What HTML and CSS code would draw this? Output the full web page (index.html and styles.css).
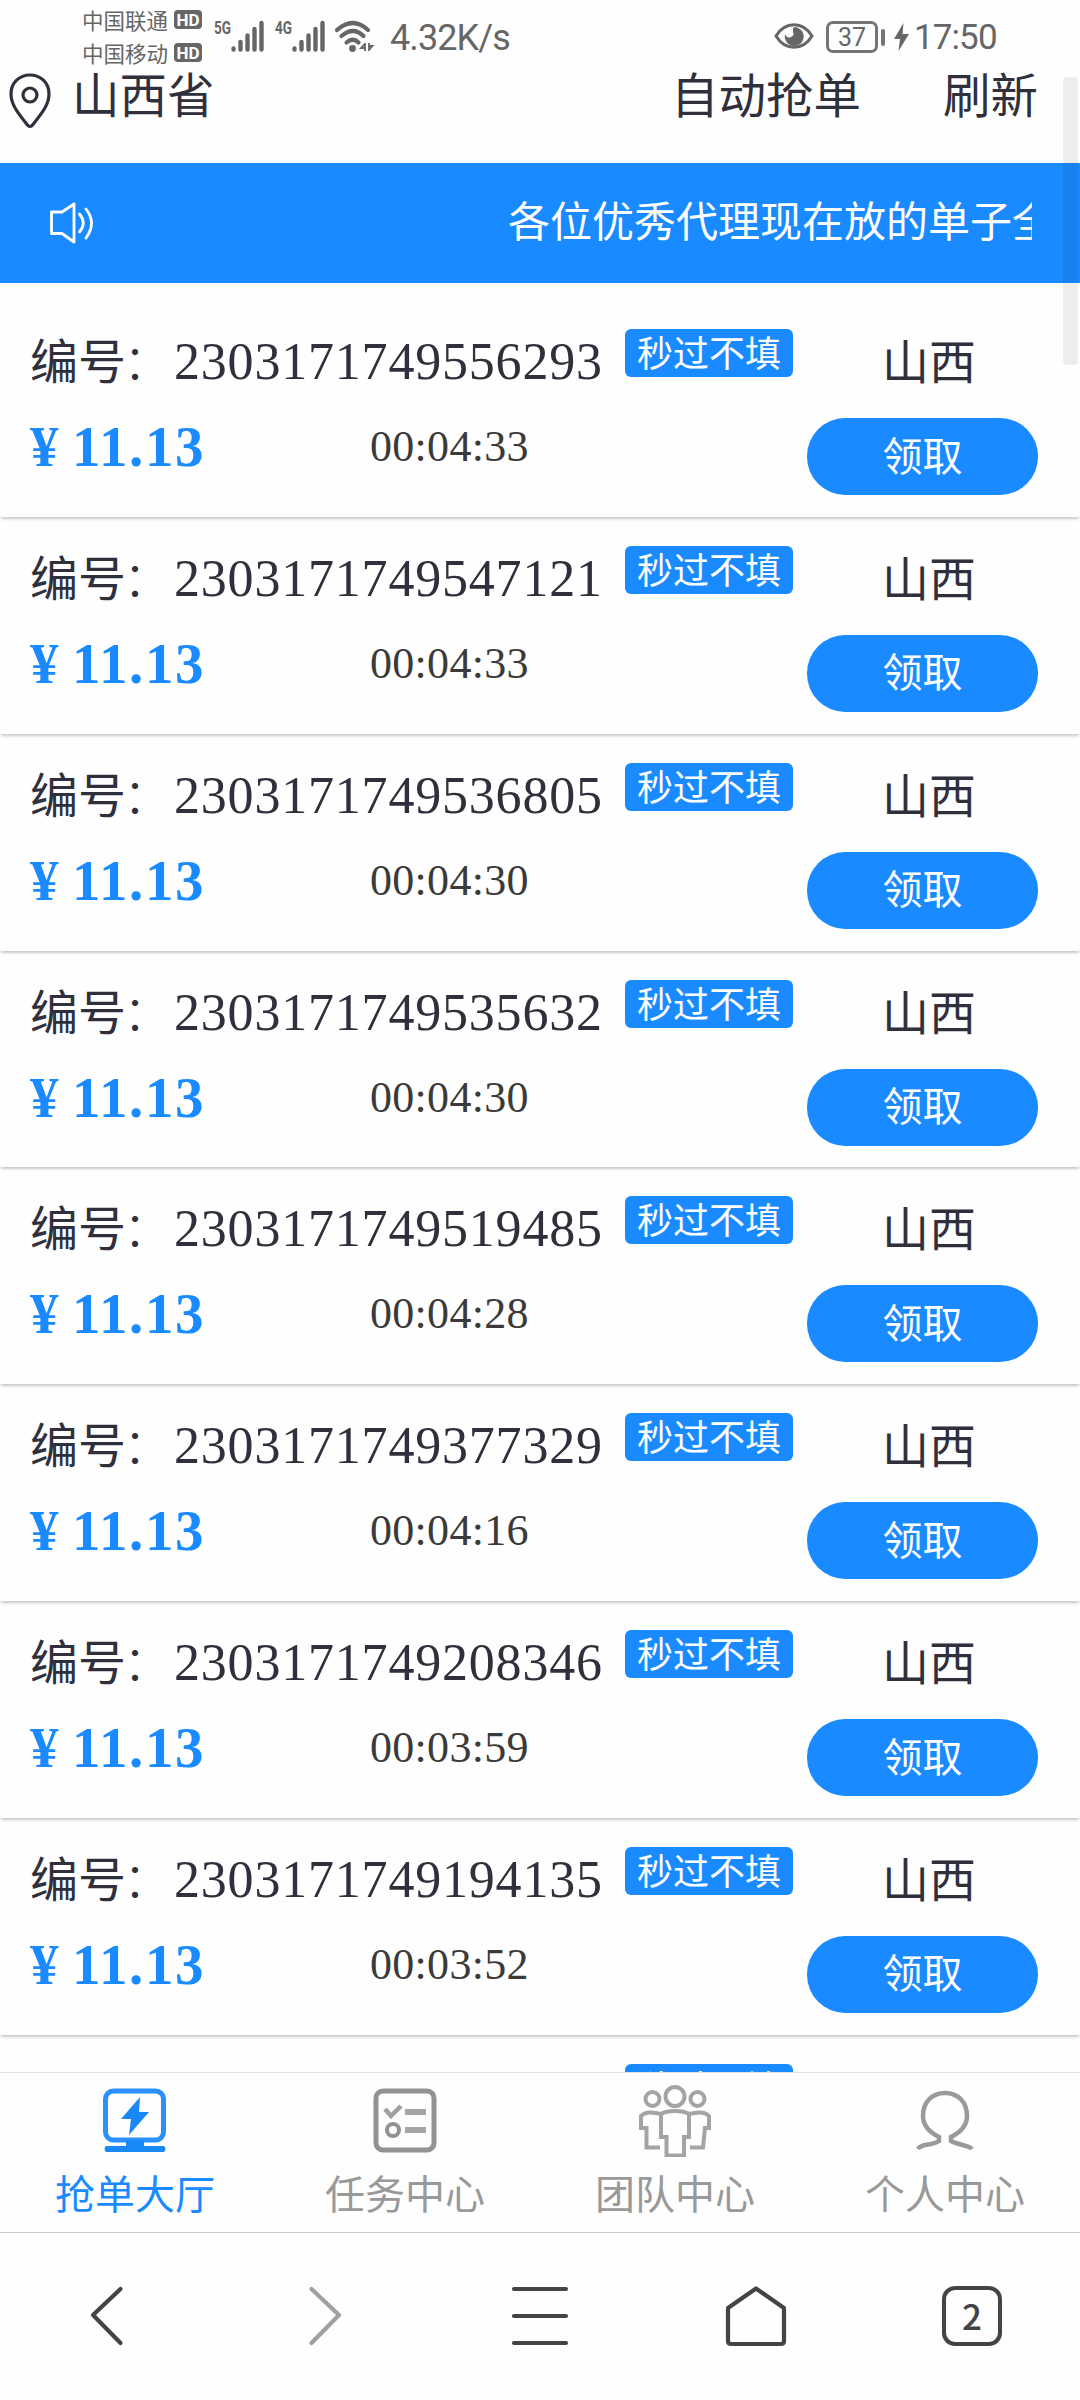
FILE: index.html
```html
<!DOCTYPE html>
<html lang="zh-CN">
<head>
<meta charset="utf-8">
<title>抢单大厅</title>
<link rel="stylesheet" href="styles.css">
</head>
<body>
<div class="statusbar">
  <div class="carriers">
    <div class="carrier">中国联通<span class="hd">HD</span></div>
    <div class="carrier">中国移动<span class="hd">HD</span></div>
  </div>
  <svg class="signals" width="160" height="36" viewBox="0 0 160 36">
    <g font-family="Roboto" font-size="18" font-weight="700" fill="#666">
      <text x="0" y="16" textLength="17" lengthAdjust="spacingAndGlyphs">5G</text>
      <text x="61" y="16" textLength="17" lengthAdjust="spacingAndGlyphs">4G</text>
    </g>
    <g stroke="#666" stroke-width="4.4" stroke-linecap="round">
      <path d="M19.500 30.500v1M26.500 24v7.500M33.500 17.500v14M40.500 11v20.500M47.500 5v26.500"/>
      <path d="M80.500 30.500v1M87.500 24v7.500M94.500 17.500v14M101.500 11v20.500M108.500 5v26.500"/>
    </g>
    <g fill="none" stroke="#666" stroke-width="4.200" stroke-linecap="round">
      <path d="M123 12Q139 -2 154 12M127.500 18Q139 8 149.500 18M132.500 24.500Q139 19 144.500 24.500"/>
    </g>
    <circle cx="138.500" cy="30.500" r="3.400" fill="#666"/>
    <path d="M151 25v8M151 25.500l-4 4.500h4M155 33v-8M155 32l3.500-4h-3.500" stroke="#666" stroke-width="1.800" fill="none"/>
  </svg>
  <span class="speed">4.32K/s</span>
  <svg class="eye" width="40" height="28" viewBox="0 0 40 28">
    <path d="M2 14C11-1 29-1 38 14C29 29 11 29 2 14Z" fill="none" stroke="#666" stroke-width="3"/>
    <path d="M20 5a9.500 9.500 0 1 1-9 7q2 5 6 3t2-5q-1-3 1-5" fill="#666"/>
  </svg>
  <div class="battery">37</div>
  <div class="tip"></div>
  <svg class="charge" width="15" height="28" viewBox="0 0 15 28"><path d="M9.500 0L0 16h6L4.500 28L15 11H8.500Z" fill="#666"/></svg>
  <span class="clock">17:50</span>
</div>
<header class="header">
  <svg class="pin" width="42" height="56" viewBox="0 0 42 56" fill="none" stroke="#30303d" stroke-width="3.200">
    <path d="M21 53.500Q19.500 53.500 18 51.500C8 39 2 31 2 21C2 9.500 10.500 2 21 2S40 9.500 40 21C40 31 34 39 24 51.500Q22.500 53.500 21 53.500Z" stroke-linejoin="round"/>
    <circle cx="21" cy="22" r="7"/>
  </svg>
  <span class="province">山西省</span>
  <span class="auto">自动抢单</span>
  <span>刷新</span>
</header>
<div class="notice">
  <svg width="46" height="42" viewBox="0 0 46 42" fill="none" stroke="#fff" stroke-width="2.800" stroke-linejoin="round" stroke-linecap="round">
    <path d="M2.500 10H13L25 2V40L13 31.500H2.500Z"/>
    <path d="M30.500 12Q38 21 30.500 30M37 7Q48 21 37 36"/>
  </svg>
  <div class="marquee">各位优秀代理现在放的单子全</div>
</div>
<main class="list">
  <section class="order"><div class="info"><div class="title"><div class="number">编号<span class="colon">：</span><span class="digits">2303171749556293</span></div><span class="tag">秒过不填</span></div><div class="detail"><div class="price"><span class="yen">¥</span>11.13</div><div class="time">00:04:33</div></div></div><div class="side"><div class="region">山西</div><button class="take">领取</button></div></section>
  <section class="order"><div class="info"><div class="title"><div class="number">编号<span class="colon">：</span><span class="digits">2303171749547121</span></div><span class="tag">秒过不填</span></div><div class="detail"><div class="price"><span class="yen">¥</span>11.13</div><div class="time">00:04:33</div></div></div><div class="side"><div class="region">山西</div><button class="take">领取</button></div></section>
  <section class="order"><div class="info"><div class="title"><div class="number">编号<span class="colon">：</span><span class="digits">2303171749536805</span></div><span class="tag">秒过不填</span></div><div class="detail"><div class="price"><span class="yen">¥</span>11.13</div><div class="time">00:04:30</div></div></div><div class="side"><div class="region">山西</div><button class="take">领取</button></div></section>
  <section class="order"><div class="info"><div class="title"><div class="number">编号<span class="colon">：</span><span class="digits">2303171749535632</span></div><span class="tag">秒过不填</span></div><div class="detail"><div class="price"><span class="yen">¥</span>11.13</div><div class="time">00:04:30</div></div></div><div class="side"><div class="region">山西</div><button class="take">领取</button></div></section>
  <section class="order"><div class="info"><div class="title"><div class="number">编号<span class="colon">：</span><span class="digits">2303171749519485</span></div><span class="tag">秒过不填</span></div><div class="detail"><div class="price"><span class="yen">¥</span>11.13</div><div class="time">00:04:28</div></div></div><div class="side"><div class="region">山西</div><button class="take">领取</button></div></section>
  <section class="order"><div class="info"><div class="title"><div class="number">编号<span class="colon">：</span><span class="digits">2303171749377329</span></div><span class="tag">秒过不填</span></div><div class="detail"><div class="price"><span class="yen">¥</span>11.13</div><div class="time">00:04:16</div></div></div><div class="side"><div class="region">山西</div><button class="take">领取</button></div></section>
  <section class="order"><div class="info"><div class="title"><div class="number">编号<span class="colon">：</span><span class="digits">2303171749208346</span></div><span class="tag">秒过不填</span></div><div class="detail"><div class="price"><span class="yen">¥</span>11.13</div><div class="time">00:03:59</div></div></div><div class="side"><div class="region">山西</div><button class="take">领取</button></div></section>
  <section class="order"><div class="info"><div class="title"><div class="number">编号<span class="colon">：</span><span class="digits">2303171749194135</span></div><span class="tag">秒过不填</span></div><div class="detail"><div class="price"><span class="yen">¥</span>11.13</div><div class="time">00:03:52</div></div></div><div class="side"><div class="region">山西</div><button class="take">领取</button></div></section>
  <section class="order"><div class="info"><div class="title"><div class="number"></div><span class="tag">秒过不填</span></div></div></section>
</main>
<nav class="tabs">
  <div class="tab active">
    <svg width="72" height="72" viewBox="0 0 72 72"><rect x="6.500" y="6" width="58" height="49" rx="8" fill="none" stroke="#2b90fa" stroke-width="5"/><path d="M41 12L22 34h10L30 50L50 27H40ZM27 55h18v6h20q3 3 0 6H7q-3-3 0-6h20Z" fill="#1989fa"/></svg>
    <span>抢单大厅</span>
  </div>
  <div class="tab">
    <svg width="72" height="72" viewBox="0 0 72 72" fill="none" stroke="#929292" stroke-width="5"><rect x="7" y="6" width="58" height="59" rx="7"/><path d="M16 24l6 7L32 21" stroke="#a0a0a0" stroke-width="4.500"/><circle cx="24" cy="45" r="6" stroke-width="4"/><path d="M36 27h21M36 45h21" stroke="#a5a5a5" stroke-width="6"/></svg>
    <span>任务中心</span>
  </div>
  <div class="tab">
    <svg width="72" height="72" viewBox="0 0 72 72" fill="none" stroke="#a4a4a4" stroke-width="4"><circle cx="36" cy="11.500" r="9.500"/><circle cx="13.500" cy="14" r="7"/><circle cx="58.500" cy="14" r="7"/><path d="M22 29Q27 26 36 26T50 29V52H45V70.500H27.500V52H22Z"/><path d="M22 29Q7 25 2 31V43H7.500V62.500H21M50 29Q65 25 70 31V43H66L64 62.500H51"/></svg>
    <span>团队中心</span>
  </div>
  <div class="tab">
    <svg width="72" height="72" viewBox="0 0 72 72" fill="none" stroke="#9a9a9a" stroke-width="4.500"><path d="M9 64C12 58 23 61 30 56V52C20 47 14 41 14 31C14 17 23 8 36 8S58 17 58 31C58 41 52 47 42 52V56C49 60 60 60 63 64"/></svg>
    <span>个人中心</span>
  </div>
</nav>
<footer class="browser">
  <svg width="60" height="64" viewBox="0 0 60 64"><path d="M42.500 5L15 31L42.500 59"/></svg>
  <svg class="disabled" width="60" height="64" viewBox="0 0 60 64"><path d="M17.500 5L45 31L17.500 59"/></svg>
  <svg width="60" height="64" viewBox="0 0 60 64"><path d="M4 5H56M4 32H56M4 59H56"/></svg>
  <svg width="64" height="64" viewBox="0 0 64 64"><path d="M32 4.500L60 24V57Q60 60 57 60H7Q4 60 4 57V24Z"/></svg>
  <div class="count">2</div>
</footer>
<div class="scrollbar"></div>
</body>
</html>
```
FILE: styles.css
```css
* { box-sizing: border-box; }
body {
  margin: 0;
  width: 1080px;
  height: 2400px;
  display: flex;
  flex-direction: column;
  overflow: hidden;
  position: relative;
  background: #fefefe;
  color: #30303d;
  font-family: "Noto Sans CJK SC", sans-serif;
}
svg { display: block; flex: none; }

.statusbar {
  height: 70px;
  flex: none;
  display: flex;
  padding-left: 82px;
  color: #666;
}
.carriers { width: 132px; padding-top: 4px; }
.carrier {
  display: flex;
  align-items: center;
  height: 33px;
  font-size: 21.5px;
  line-height: 28px;
  padding-bottom: 2px;
  white-space: nowrap;
}
.hd {
  margin-left: 6px;
  width: 28px;
  height: 19px;
  border-radius: 4px;
  background: #666;
  color: #fff;
  font: 700 17px/20px Roboto, sans-serif;
  text-align: center;
}
.signals { margin-top: 18px; overflow: visible; }
.speed {
  margin-left: 16px;
  width: 123px;
  font: 400 36px/76px Roboto, sans-serif;
  letter-spacing: -0.9px;
}
.eye { margin: 22px 0 0 261px; }
.battery {
  margin: 21px 0 0 12px;
  width: 52px;
  height: 32px;
  border: 3px solid #757575;
  border-radius: 7px;
  font: 400 25px/27px Roboto, sans-serif;
  text-align: center;
}
.tip { margin: 29px 0 0 3px; width: 4px; height: 17px; border-radius: 2px; background: #757575; }
.charge { margin: 23px 0 0 9px; }
.clock { margin-left: 5px; font: 400 35px/76px Roboto, sans-serif; letter-spacing: -0.9px; }

.header {
  height: 93px;
  flex: none;
  display: flex;
  padding: 0 42px 0 9px;
  font-size: 47.5px;
  line-height: 46px;
}
.pin { margin-top: 3px; }
.province { margin-left: 21px; }
.auto { margin: 0 82px 0 auto; }

.notice {
  height: 120px;
  flex: none;
  display: flex;
  align-items: center;
  padding: 0 48px 0 49px;
  background: #198aff;
  color: #fff;
}
.marquee {
  flex: 1;
  margin-left: 10px;
  padding-left: 403px;
  overflow: hidden;
  white-space: nowrap;
  font-size: 42px;
  line-height: 64px;
  margin-top: -8px;
}

.list { height: 1789px; flex: none; overflow: hidden; padding-top: 17px; }
.order {
  height: 216.85px;
  display: flex;
  justify-content: space-between;
  padding: 29px 42px 0 30px;
  border-radius: 2px;
  box-shadow: 0 3px 3px -1px #c8c8c8;
}
.title { display: flex; align-items: flex-start; height: 66px; }
.number { width: 595px; font-size: 48px; line-height: 58px; white-space: nowrap; }
.colon { display: inline-block; width: 48px; text-indent: -3px; font-weight: 300; }
.digits { font-family: "Liberation Serif", serif; font-size: 52px; letter-spacing: 0.8px; }
.tag {
  width: 168px;
  height: 48px;
  border-radius: 6px;
  background: #198aff;
  color: #fff;
  font-size: 36px;
  line-height: 45px;
  text-align: center;
}
.detail { display: flex; font-family: "Liberation Serif", serif; height: 70px; }
.price {
  width: 340px;
  color: #198aff;
  font-size: 57px;
  font-weight: 700;
  line-height: 103px;
  letter-spacing: 1.6px;
}
.yen { display: inline-block; width: 42px; }
.time { color: #3a3a3a; font-size: 44px; line-height: 104px; letter-spacing: 0.3px; }
.side { width: 231px; }
.region { height: 89px; padding-left: 13px; font-size: 47px; line-height: 60px; text-align: center; }
.take {
  display: block;
  width: 231px;
  height: 77px;
  padding: 0 0 6px;
  border: 0;
  border-radius: 38px;
  background: #198aff;
  color: #fff;
  font: 400 40px/70px "Noto Sans CJK SC", sans-serif;
}

.tabs {
  height: 161px;
  flex: none;
  display: grid;
  grid-template-columns: repeat(4, 1fr);
  border-top: 1px solid #e2e2e2;
  border-bottom: 1px solid #ccc;
  background: #fefefe;
}
.tab {
  display: flex;
  flex-direction: column;
  align-items: center;
  padding-top: 12px;
  color: #999;
  font-size: 40px;
  line-height: 70px;
}
.active { color: #198aff; }

.browser {
  flex: 1;
  display: grid;
  grid-template-columns: repeat(5, 1fr);
  justify-items: center;
  padding-top: 51px;
}
.browser svg { fill: none; stroke: #444; stroke-width: 4.2; stroke-linecap: round; stroke-linejoin: round; }
.browser .disabled { stroke: #a0a0a0; }
.count {
  margin-top: 2px;
  width: 60px;
  height: 60px;
  border: 4px solid #444;
  border-radius: 13px;
  color: #444;
  font-size: 35px;
  font-weight: 500;
  line-height: 49px;
  text-align: center;
}

.scrollbar {
  position: absolute;
  top: 77px;
  right: 2px;
  width: 15px;
  height: 288px;
  border-radius: 4px;
  background: rgba(40, 40, 40, 0.08);
}
```
